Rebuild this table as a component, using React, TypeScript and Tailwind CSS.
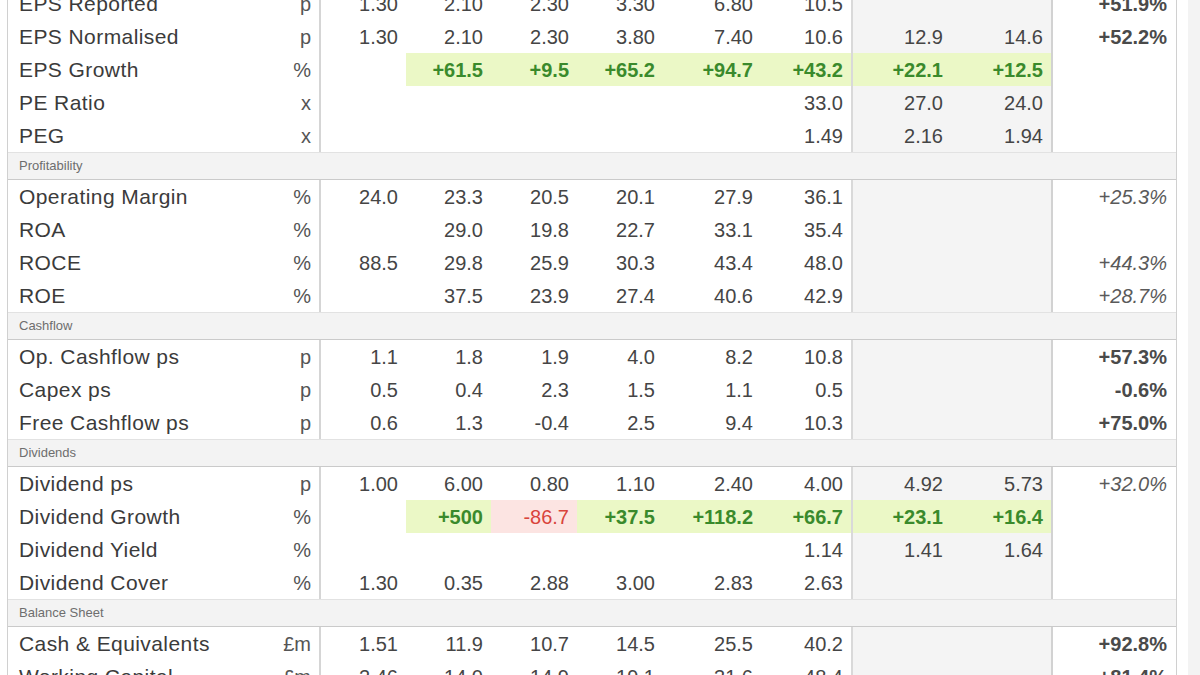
import React from "react";

// Key figures table — historical years, two forecast years, then a growth column.
type Tone = "up" | "down" | undefined;
type Cell = string | { v: string; tone: Tone };
type Growth = { v: string; style: "bold" | "italic" } | null;

type Row =
  | { kind: "section"; title: string }
  | { kind: "data"; label: string; unit: string; cells: Cell[]; growth?: Growth };

const up = (v: string): Cell => ({ v, tone: "up" });
const down = (v: string): Cell => ({ v, tone: "down" });

const ROWS: Row[] = [
  { kind: "data", label: "EPS Reported", unit: "p", cells: ["1.30", "2.10", "2.30", "3.30", "6.80", "10.5", "", ""], growth: { v: "+51.9%", style: "bold" } },
  { kind: "data", label: "EPS Normalised", unit: "p", cells: ["1.30", "2.10", "2.30", "3.80", "7.40", "10.6", "12.9", "14.6"], growth: { v: "+52.2%", style: "bold" } },
  { kind: "data", label: "EPS Growth", unit: "%", cells: ["", up("+61.5"), up("+9.5"), up("+65.2"), up("+94.7"), up("+43.2"), up("+22.1"), up("+12.5")] },
  { kind: "data", label: "PE Ratio", unit: "x", cells: ["", "", "", "", "", "33.0", "27.0", "24.0"] },
  { kind: "data", label: "PEG", unit: "x", cells: ["", "", "", "", "", "1.49", "2.16", "1.94"] },
  { kind: "section", title: "Profitability" },
  { kind: "data", label: "Operating Margin", unit: "%", cells: ["24.0", "23.3", "20.5", "20.1", "27.9", "36.1", "", ""], growth: { v: "+25.3%", style: "italic" } },
  { kind: "data", label: "ROA", unit: "%", cells: ["", "29.0", "19.8", "22.7", "33.1", "35.4", "", ""] },
  { kind: "data", label: "ROCE", unit: "%", cells: ["88.5", "29.8", "25.9", "30.3", "43.4", "48.0", "", ""], growth: { v: "+44.3%", style: "italic" } },
  { kind: "data", label: "ROE", unit: "%", cells: ["", "37.5", "23.9", "27.4", "40.6", "42.9", "", ""], growth: { v: "+28.7%", style: "italic" } },
  { kind: "section", title: "Cashflow" },
  { kind: "data", label: "Op. Cashflow ps", unit: "p", cells: ["1.1", "1.8", "1.9", "4.0", "8.2", "10.8", "", ""], growth: { v: "+57.3%", style: "bold" } },
  { kind: "data", label: "Capex ps", unit: "p", cells: ["0.5", "0.4", "2.3", "1.5", "1.1", "0.5", "", ""], growth: { v: "-0.6%", style: "bold" } },
  { kind: "data", label: "Free Cashflow ps", unit: "p", cells: ["0.6", "1.3", "-0.4", "2.5", "9.4", "10.3", "", ""], growth: { v: "+75.0%", style: "bold" } },
  { kind: "section", title: "Dividends" },
  { kind: "data", label: "Dividend ps", unit: "p", cells: ["1.00", "6.00", "0.80", "1.10", "2.40", "4.00", "4.92", "5.73"], growth: { v: "+32.0%", style: "italic" } },
  { kind: "data", label: "Dividend Growth", unit: "%", cells: ["", up("+500"), down("-86.7"), up("+37.5"), up("+118.2"), up("+66.7"), up("+23.1"), up("+16.4")] },
  { kind: "data", label: "Dividend Yield", unit: "%", cells: ["", "", "", "", "", "1.14", "1.41", "1.64"] },
  { kind: "data", label: "Dividend Cover", unit: "%", cells: ["1.30", "0.35", "2.88", "3.00", "2.83", "2.63", "", ""] },
  { kind: "section", title: "Balance Sheet" },
  { kind: "data", label: "Cash & Equivalents", unit: "£m", cells: ["1.51", "11.9", "10.7", "14.5", "25.5", "40.2", "", ""], growth: { v: "+92.8%", style: "bold" } },
  { kind: "data", label: "Working Capital", unit: "£m", cells: ["2.46", "14.0", "14.9", "19.1", "31.6", "48.4", "", ""], growth: { v: "+81.4%", style: "bold" } },
];

const GRID =
  "grid grid-cols-[273px_38px_87px_85px_86px_86px_98px_90px_100px_100px_127px]";

function ValueCell({ cell, index }: { cell: Cell; index: number }) {
  const value = typeof cell === "string" ? cell : cell.v;
  const tone = typeof cell === "string" ? undefined : cell.tone;
  const forecast = index >= 6;

  let bg = forecast ? "bg-[#f4f4f4]" : "bg-white";
  let text = "text-[#454545]";
  if (tone === "up") {
    bg = "bg-[#ebf8c6]";
    text = "text-[#3a8a2c] font-bold";
  } else if (tone === "down") {
    bg = "bg-[#fce4e2]";
    text = "text-[#d9443c]";
  }

  const divider =
    index === 0
      ? "border-l-2 border-[#d5d5d5]"
      : index === 6
        ? "border-l-2 border-[#d9d9d9]"
        : "";

  return (
    <div className={`flex items-center justify-end pr-[8px] text-[20px] ${bg} ${text} ${divider}`}>
      {value}
    </div>
  );
}

function DataRow({ row }: { row: Extract<Row, { kind: "data" }> }) {
  return (
    <div className={`${GRID} h-[33px]`}>
      <div className="flex items-center pl-[11px] text-[21px] tracking-[0.02em] text-[#3b3b3b]">
        {row.label}
      </div>
      <div className="flex items-center justify-end pr-[8px] text-[20px] text-[#555]">{row.unit}</div>
      {row.cells.map((c, i) => (
        <ValueCell key={i} cell={c} index={i} />
      ))}
      <div
        className={`flex items-center justify-end border-l-2 border-[#d2d2d2] pr-[11px] text-[20px] ${
          row.growth?.style === "italic" ? "italic text-[#5a5a5a]" : "font-bold text-[#4a4a4a]"
        }`}
      >
        {row.growth?.v ?? ""}
      </div>
    </div>
  );
}

function SectionRow({ title }: { title: string }) {
  return (
    <div className="flex h-[28px] items-center border-y border-t-[#e2e2e2] border-b-[#cacaca] bg-[#f3f3f3] pl-[11px] text-[13px] text-[#6e6e6e]">
      {title}
    </div>
  );
}

export default function App() {
  return (
    <div
      className="flex h-[675px] w-[1200px] overflow-hidden bg-white"
      style={{ fontFamily: '"Liberation Sans", Arial, sans-serif' }}
    >
      <div className="w-[7px] shrink-0" />
      <div className="mt-[-13px] w-[1170px] shrink-0 border-x border-[#d0d0d0]">
        {ROWS.map((row, i) =>
          row.kind === "section" ? (
            <SectionRow key={i} title={row.title} />
          ) : (
            <DataRow key={i} row={row} />
          ),
        )}
      </div>
      <div className="w-[11px] shrink-0" />
      <div className="flex-1 bg-[#f3f3f3]" />
    </div>
  );
}
